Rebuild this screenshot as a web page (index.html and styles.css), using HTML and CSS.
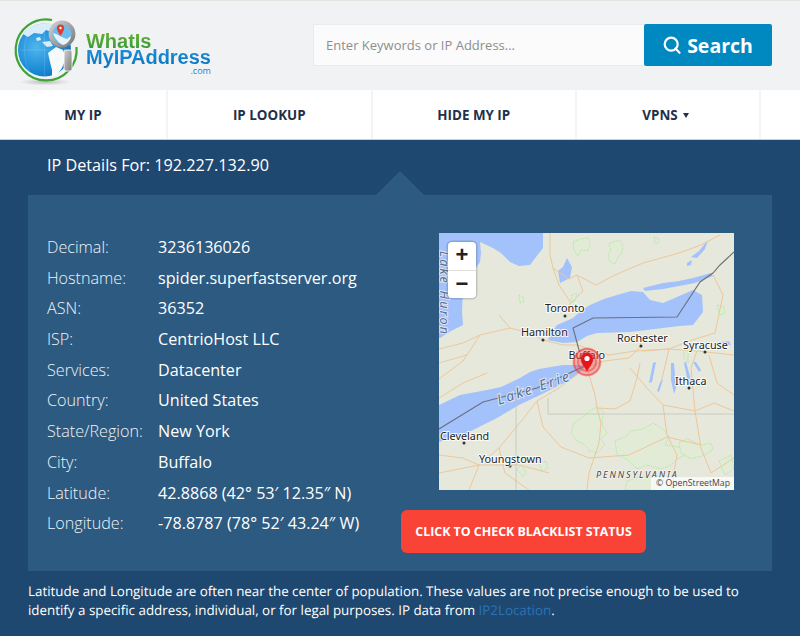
FILE: index.html
```html
<!DOCTYPE html>
<html lang="en">
<head>
<meta charset="utf-8">
<title>IP Details</title>
<link rel="stylesheet" href="styles.css">
</head>
<body>
<header class="header">
  <a class="logo">
    <svg class="logo-mark" viewBox="12 16 72 76" width="72" height="76">
      <defs>
        <radialGradient id="sea" cx="35%" cy="45%" r="75%"><stop offset="0" stop-color="#4fb6ee"/><stop offset=".6" stop-color="#1a8ad6"/><stop offset="1" stop-color="#0f66ae"/></radialGradient>
        <linearGradient id="metal" x1="0" y1="0" x2="1" y2="1"><stop offset="0" stop-color="#cfcfcf"/><stop offset="1" stop-color="#7b7b7b"/></linearGradient>
        <radialGradient id="shade"><stop offset="0" stop-color="#8a8a8a" stop-opacity=".55"/><stop offset="1" stop-color="#9a9a9a" stop-opacity="0"/></radialGradient>
      </defs>
      <ellipse cx="45" cy="82" rx="26" ry="3.500" fill="url(#shade)"/>
      <path d="M52 20A30.500 30.500 0 1 0 76.500 47" fill="none" stroke="#3fa535" stroke-width="2.200"/>
      <circle cx="44.500" cy="50" r="26.500" fill="url(#sea)"/>
      <path d="M23 34C29 26 38 22.500 50 23L56 27L51 32L46 30L42 34L34 33L28 37Z" fill="#d9edf9"/>
      <path d="M42 42L50 41L53 46L47 47ZM36 38L40 37L41 40L37 41Z" fill="#d9edf9"/>
      <path d="M48 53L56 47L63 50L66 58L62 68L57 75L52 76.500L52 70L50 62Z" fill="#f6fafc"/>
      <path d="M19 50H71M44.500 24V76M29 29C23 42 23 58 29 71M60 29C66 42 66 58 60 71" fill="none" stroke="#fff" stroke-opacity=".22" stroke-width=".6"/>
      <rect x="64" y="50" width="8" height="21" rx="2" fill="url(#metal)" stroke="#fff" stroke-width=".8"/>
      <circle cx="62" cy="34" r="11.500" fill="#6dbcec" stroke="url(#metal)" stroke-width="3.800"/>
      <path d="M53 33C58 34 62 38 67 39L71 36C70 41 67 44 63 45C59 43 55 39 53 33Z" fill="#e8f4fb"/>
      <path d="M60.500 36C58.500 32.500 56.900 30.500 56.900 28.200A3.600 3.600 0 0 1 64.100 28.200C64.100 30.500 62.500 32.500 60.500 36Z" fill="#e53a30"/>
      <circle cx="60.500" cy="28" r="1.200" fill="#fff"/>
    </svg>
    <span class="logo-text">
      <span class="logo-line logo-green">WhatIs</span>
      <span class="logo-line logo-blue">MyIPAddress</span>
      <span class="logo-com">.com</span>
    </span>
  </a>
  <form class="search">
    <input class="search-input" type="text" placeholder="Enter Keywords or IP Address...">
    <button class="search-button" type="button">
      <svg viewBox="0 0 18 18" width="18" height="18"><circle cx="8.200" cy="8.200" r="6.500" fill="none" stroke="#fff" stroke-width="2.200"/><path d="M12.500 12.500L16.500 16.800" stroke="#fff" stroke-width="2.200" stroke-linecap="round"/></svg>
      <span>Search</span>
    </button>
  </form>
</header>
<nav class="nav">
  <a class="nav-item nav-first">MY IP</a>
  <a class="nav-item">IP LOOKUP</a>
  <a class="nav-item">HIDE MY IP</a>
  <a class="nav-item nav-last">VPNS<span class="caret"></span></a>
</nav>
<main class="main">
  <h1 class="title">IP Details For: 192.227.132.90</h1>
  <section class="panel">
    <dl class="details">
      <div class="row"><dt>Decimal:</dt><dd>3236136026</dd></div>
      <div class="row"><dt>Hostname:</dt><dd>spider.superfastserver.org</dd></div>
      <div class="row"><dt>ASN:</dt><dd>36352</dd></div>
      <div class="row"><dt>ISP:</dt><dd>CentrioHost LLC</dd></div>
      <div class="row"><dt>Services:</dt><dd>Datacenter</dd></div>
      <div class="row"><dt>Country:</dt><dd>United States</dd></div>
      <div class="row"><dt>State/Region:</dt><dd>New York</dd></div>
      <div class="row"><dt>City:</dt><dd>Buffalo</dd></div>
      <div class="row"><dt>Latitude:</dt><dd>42.8868 (42° 53′ 12.35″ N)</dd></div>
      <div class="row"><dt>Longitude:</dt><dd>-78.8787 (78° 52′ 43.24″ W)</dd></div>
    </dl>
    <div class="side">
      <div class="map">
        <svg class="map-art" viewBox="0 0 295 257" width="295" height="257">
          <rect width="295" height="257" fill="#e6e8db"/>
          <g fill="#a3c1fb">
            <path d="M0 0H104V15L97 24L91 32L80 33L71 29L62 20L54 15L41 9L42 20L41 29L30 45L24 59L23 78L24 92L12 98L1 105H0Z"/>
            <path d="M128 25L133 34L131 45L121 50L119 38L124 34Z"/>
            <path d="M109 107L112 100L118 92L134 85L143 77L151 72L165 66L178 62L192 58L204 59L211 67L224 70L238 64L254 57L263 62L264 79L254 92L240 93L224 95L191 99L158 100L148 103L138 109L124 110Z"/>
            <path d="M204 55L224 50L240 48L254 45L272 40L274 43L256 50L240 53L224 56L206 58Z"/>
            <path d="M148 132L124 132L100 136L91 139L81 145L62 154L48 157L21 162L0 172V209L24 202L58 185L80 172L101 162L125 150L138 142Z"/>
            <path d="M252 24L260 18L269 7L266 16L258 25ZM248 30L253 27L252 32L248 33Z"/>
            <path d="M214 130L217 129L213 149L210 150ZM232 130L235 130L237 155L235 161L232 147ZM245 130L247 129L252 147L249 149ZM254 129L257 129L262 137L260 139ZM222 147L224 147L220 159L218 158Z"/>
            <path d="M275 110L290 108L292 112L278 114Z"/>
          </g>
          <g fill="#e2ebd5" stroke="#a9e59b" stroke-width=".8" stroke-dasharray="1.500 1">
            <path d="M134 9L141 6L150 5L151 12L149 18L142 17L139 23L135 17Z"/>
            <path d="M170 11L176 8L182 8L184 14L182 21L179 24L176 31L171 29L169 22L172 17Z"/>
            <path d="M215 4L219 5L220 9L216 11Z"/>
            <path d="M80 62L84 64L85 69L81 70Z"/>
            <path d="M133 62L138 60L136 68L132 70Z"/>
            <path d="M278 72L285 74L286 80L281 82Z"/>
            <path d="M245 112L249 118L249 130L245 125Z"/>
            <path d="M135 190L145 183L152 177L158 174L164 178L163 192L168 200L162 206L166 212L158 220L150 218L146 212L138 208L132 200Z"/>
            <path d="M176 208L186 204L192 198L204 196L214 190L224 196L230 204L226 212L240 214L246 222L238 226L232 232L222 236L208 232L198 236L188 226L178 222Z"/>
            <path d="M240 210L248 206L262 212L272 210L274 216L266 222L252 226L242 220Z"/>
            <path d="M78 236L83 232L87 240L84 244Z"/>
            <path d="M100 230L107 228L109 235L103 238Z"/>
            <path d="M188 248L200 244L216 242L226 248L236 257H186Z"/>
            <path d="M280 228L292 222L295 236L286 242Z"/>
          </g>
          <g fill="none" stroke="#edc79b" stroke-width="1" stroke-linejoin="round">
            <path d="M111 0L111 22L114 35L130 46L138 42L157 52L176 42L204 30L240 20L262 12L281 2"/>
            <path d="M138 42L144 58L130 72M114 35L120 52L132 70"/>
            <path d="M71 95L90 100L104 107L124 112L138 112L170 122L196 118L230 116L258 118L295 122"/>
            <path d="M0 116L24 110L41 102L71 95L60 82M41 102L24 128L0 146"/>
            <path d="M148 135L165 128L190 125L200 115L204 105M204 118L230 116L250 108L276 100L284 62L274 42"/>
            <path d="M191 135L208 155L224 172L228 202L238 222L232 257"/>
            <path d="M148 135L156 162L158 175L176 176L191 168L198 145L201 130"/>
            <path d="M158 175L162 190L160 210L150 240L148 257"/>
            <path d="M140 140L120 155L98 168L84 186L60 215L40 232L24 225L0 222"/>
            <path d="M98 168L104 194L122 214L150 225L190 222L228 204L262 212"/>
            <path d="M60 215L66 240L90 257M40 232L30 257M0 240L40 232L80 232L110 240"/>
            <path d="M224 172L256 178L262 215L272 240L295 225M256 178L275 170L295 178M256 178L252 135L258 118"/>
            <path d="M0 165L24 150L48 140M0 130L28 122"/>
            <path d="M270 122L278 150L295 162M230 116L222 150"/>
          </g>
          <path d="M109 165V181H295M77 162V257" fill="none" stroke="#c4c4ba" stroke-width=".8"/>
          <path d="M295 19L281 32L274 40L261 49L238 84L154 85L134 95L140 117L148 132L98 155L44 169L0 196" fill="none" stroke="#6c7078" stroke-width="1.100"/>
          <g fill="#333"><circle cx="126" cy="83" r="1.500"/><circle cx="104" cy="107" r="1.500"/><circle cx="202" cy="113" r="1.500"/><circle cx="266" cy="119" r="1.500"/><circle cx="250" cy="155" r="1.500"/><circle cx="25" cy="210" r="1.500"/><circle cx="71" cy="233" r="1.500"/></g>
          <g class="map-labels">
            <text x="106" y="79">Toronto</text>
            <text x="82" y="103">Hamilton</text>
            <text x="178" y="109">Rochester</text>
            <text x="244" y="116">Syracuse</text>
            <text x="129.500" y="126">Buffalo</text>
            <text x="236" y="152">Ithaca</text>
            <text x="1" y="207">Cleveland</text>
            <text x="40" y="230">Youngstown</text>
          </g>
          <text class="map-water" transform="rotate(-19 60 172)" x="60" y="172">Lake Erie</text>
          <text class="map-water map-huron" transform="rotate(90 1 18)" x="1" y="18">Lake Huron</text>
          <text class="map-state" x="157" y="245">PENNSYLVANIA</text>
          <circle cx="148" cy="129" r="14.500" fill="#f04848" fill-opacity=".35"/>
          <circle cx="148" cy="129" r="13" fill="none" stroke="#f03838" stroke-opacity=".6" stroke-width="1.500"/>
          <circle cx="148" cy="129" r="9" fill="none" stroke="#f03838" stroke-opacity=".5" stroke-width="2"/>
          <path d="M148 138C145 133 142 130 142 126A6 6 0 0 1 154 126C154 130 151 133 148 138Z" fill="#e8141c" stroke="#e8141c" stroke-width=".5"/>
          <circle cx="148" cy="125.500" r="2.600" fill="#fff"/>
        </svg>
        <div class="zoom">
          <span class="zoom-btn">+</span>
          <span class="zoom-btn">−</span>
        </div>
        <div class="attribution">© OpenStreetMap</div>
      </div>
      <a class="check">CLICK TO CHECK BLACKLIST STATUS</a>
    </div>
  </section>
  <p class="note">Latitude and Longitude are often near the center of population. These values are not precise enough to be used to identify a specific address, individual, or for legal purposes. IP data from <a class="note-link">IP2Location</a>.</p>
</main>
</body>
</html>
```
FILE: styles.css
```css
* { box-sizing: border-box; }
html, body { margin: 0; padding: 0; height: 636px; overflow: hidden; }
body { font-family: "Open Sans", sans-serif; background: #1f4870; color: #fff; }

.header {
  height: 90px;
  background: #f1f2f4;
  border-top: 1px solid #e4e4df;
  display: flex;
  align-items: flex-start;
  justify-content: space-between;
  padding: 15px 28px 0 12px;
}
.logo { display: flex; align-items: flex-start; }
.logo-mark { flex: none; }
.logo-text { display: flex; flex-direction: column; margin: 17px 0 0 2px; font-family: "Liberation Sans", sans-serif; font-weight: 700; }
.logo-line { font-size: 20px; line-height: 16px; padding-bottom: 5px; margin-bottom: -5px; letter-spacing: -.03px; -webkit-background-clip: text; background-clip: text; color: transparent; }
.logo-green { background-image: linear-gradient(#62b02f, #3e9a3a 70%); }
.logo-blue { background-image: linear-gradient(#1c8fd6, #0f78c4 70%); }
.logo-com { font-size: 9px; line-height: 9px; font-weight: 400; color: #1c84cc; align-self: flex-end; margin-top: 1px; font-family: "Open Sans", sans-serif; }

.search { display: flex; margin-top: 8px; }
.search-input {
  width: 331px; height: 42px;
  background: #fbfbfb;
  border: 1px solid #ebebeb;
  border-right: 0;
  padding: 0 12px;
  font: 400 13px "Open Sans", sans-serif;
  color: #555;
  outline: none;
}
.search-input::placeholder { color: #8e8e8e; opacity: 1; }
.search-button {
  width: 128px; height: 42px;
  background: #0088c0;
  border: 0;
  border-radius: 2px;
  color: #fff;
  font: 700 19.500px "Open Sans", sans-serif;
  display: flex; align-items: center; justify-content: center; gap: 6px;
  padding: 0;
}

.nav {
  height: 50px;
  background: #fff;
  border-bottom: 1px solid #c9d2da;
  display: flex;
}
.nav-item {
  width: 204.500px;
  border-right: 2px solid #f3f4f5;
  display: flex; align-items: center; justify-content: center;
  font-weight: 700; font-size: 13.400px; color: #22304a;
}
.nav-first { width: 168px; }
.nav-last { width: 184px; padding-right: 5px; }
.caret { width: 0; height: 0; margin: 1px 0 0 5px; border-style: solid; border-width: 5px 3px 0; border-color: #22304a transparent transparent; }

.main { position: relative; }
.title { margin: 0; padding: 14px 0 0 47px; height: 55px; font-size: 16.200px; line-height: 22px; font-weight: 400; }
.panel {
  position: relative;
  margin: 0 28px;
  height: 376px;
  background: #2d5a80;
  display: flex;
  padding: 37px 0 0 19px;
}
.panel::before {
  content: "";
  position: absolute;
  left: 348px; top: -24px;
  width: 48px; height: 24px;
  background: #2d5a80;
  clip-path: polygon(50% 0, 100% 100%, 0 100%);
}
.details { margin: 0; width: 354px; flex: none; }
.row { display: flex; height: 30.700px; line-height: 30.700px; font-size: 16.150px; }
.row dt { width: 111px; font-weight: 300; color: #f0f4f7; }
.row dd { margin: 0; white-space: nowrap; }

.side { display: flex; flex-direction: column; align-items: flex-start; padding-top: 1px; }
.map { position: relative; width: 295px; height: 257px; margin-left: 38px; overflow: hidden; }
.map-art { display: block; }
.map-labels text { font: 400 10.800px "Noto Sans", sans-serif; fill: #222; stroke: #fff; stroke-opacity: .85; stroke-width: 2px; paint-order: stroke; }
.map-water { font: italic 400 14px "Noto Sans", sans-serif; letter-spacing: 2.500px; fill: #5c6f8c; stroke: #dfe7f5; stroke-width: 2px; paint-order: stroke; }
.map-huron { font-size: 12.500px; letter-spacing: 2.200px; }
.map-state { font: italic 400 9px "Noto Sans", sans-serif; letter-spacing: 1.900px; fill: #444; stroke: #fff; stroke-opacity: .6; stroke-width: 1.500px; paint-order: stroke; }
.zoom {
  position: absolute; left: 9px; top: 9px;
  width: 28px;
  background: #fff;
  border-radius: 4px;
  box-shadow: 0 0 0 1.500px rgba(0,0,0,.15);
  display: flex; flex-direction: column;
}
.zoom-btn { height: 28px; text-align: center; font: 700 22px/26px "Liberation Sans", sans-serif; color: #222; }
.zoom-btn + .zoom-btn { border-top: 1px solid #ddd; }
.attribution {
  position: absolute; right: 0; bottom: 0;
  background: rgba(255,255,255,.7);
  padding: 0 4px 0 5px;
  font-size: 8.700px; line-height: 13px;
  color: #444;
}
.check {
  margin-top: 20px;
  width: 245px; height: 43px;
  background: #f94336;
  border-radius: 6px;
  display: flex; align-items: center; justify-content: center;
  font-weight: 700; font-size: 12.400px; color: #fff;
}

.note { margin: 11px 0 0 28px; width: 744px; font-size: 13.370px; text-rendering: geometricPrecision; line-height: 19px; }
.note-link { color: #2a72b5; }
```
